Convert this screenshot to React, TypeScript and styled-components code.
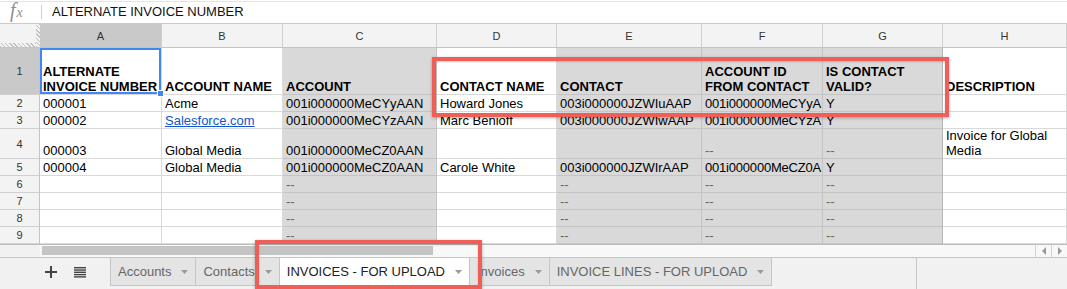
import styled, { createGlobalStyle } from 'styled-components'

const GlobalStyle = createGlobalStyle`
  html, body {
    margin: 0;
    padding: 0;
    background: #ffffff;
  }
  body {
    font-family: "Liberation Sans", Arial, sans-serif;
    color: #000;
  }
`

const COLUMNS = ['A', 'B', 'C', 'D', 'E', 'F', 'G', 'H']
const LOCKED = [false, false, true, false, true, true, true, false]

type CellValue = string | { link: string }

const HEADINGS = [
  'ALTERNATE INVOICE NUMBER',
  'ACCOUNT NAME',
  'ACCOUNT',
  'CONTACT NAME',
  'CONTACT',
  'ACCOUNT ID FROM CONTACT',
  'IS CONTACT VALID?',
  'DESCRIPTION',
]

const EMPTY_ROW: CellValue[] = ['', '', '--', '', '--', '--', '--', '']

// column F is narrower than its ids, the sheet shows them cut at the border
const ROWS: CellValue[][] = [
  ['000001', 'Acme', '001i000000MeCYyAAN', 'Howard Jones', '003i000000JZWIuAAP', '001i000000MeCYyA', 'Y', ''],
  ['000002', { link: 'Salesforce.com' }, '001i000000MeCYzAAN', 'Marc Benioff', '003i000000JZWIwAAP', '001i000000MeCYzA', 'Y', ''],
  ['000003', 'Global Media', '001i000000MeCZ0AAN', '', '', '--', '--', 'Invoice for Global Media'],
  ['000004', 'Global Media', '001i000000MeCZ0AAN', 'Carole White', '003i000000JZWIrAAP', '001i000000MeCZ0A', 'Y', ''],
  EMPTY_ROW,
  EMPTY_ROW,
  EMPTY_ROW,
  EMPTY_ROW,
]

const TABS = ['Accounts', 'Contacts', 'INVOICES - FOR UPLOAD', 'Invoices', 'INVOICE LINES - FOR UPLOAD']

const Page = styled.div`
  position: relative;
  width: 1067px;
  height: 289px;
  overflow: hidden;
  background: #fff;
`

const FormulaBar = styled.div`
  box-sizing: border-box;
  height: 24px;
  display: flex;
  align-items: center;
  background: linear-gradient(#fff 0 1px, #e4e4e4 1px 2px, #fff 2px);
  border-bottom: 1px solid #cacaca;
`

const FxIcon = styled.div`
  box-sizing: border-box;
  width: 41px;
  padding-left: 10px;
  color: #8e8e8e;
  font-family: "Liberation Serif", "Times New Roman", serif;
  font-style: italic;
  font-size: 20px;
  line-height: 20px;

  small {
    font-size: 14px;
    margin-left: 1px;
  }
`

const FormulaDivider = styled.div`
  width: 1px;
  height: 14px;
  background: #cfcfcf;
`

const FormulaText = styled.div`
  margin-left: 10px;
  font-size: 13px;
  color: #111;
`

const Grid = styled.div`
  display: grid;
  grid-template-columns: 40px 122px 121px 154px 120px 145px 121px 120px 124px;
  grid-template-rows: 24px 47px 17px 17px 30px 17px 17px 17px 17px 17px;
`

const Corner = styled.div`
  box-sizing: border-box;
  border-bottom: 1px solid #c4c4c4;
  background:
    repeating-linear-gradient(45deg, #c2c2c2 0 1px, #f1f1f1 1px 3px) right top / 4px 100% no-repeat,
    repeating-linear-gradient(45deg, #c2c2c2 0 1px, #f1f1f1 1px 3px) left bottom / 100% 4px no-repeat,
    #f3f3f3;
`

const ColumnHeader = styled.div<{ $active?: boolean }>`
  box-sizing: border-box;
  display: flex;
  align-items: center;
  justify-content: center;
  border-right: 1px solid #d0d0d0;
  border-bottom: 1px solid #c4c4c4;
  background: ${(p) => (p.$active ? '#c9c9c9' : '#f3f3f3')};
  font-size: 11px;
  color: #333;
`

const RowHeader = styled.div<{ $active?: boolean }>`
  box-sizing: border-box;
  display: flex;
  align-items: center;
  justify-content: center;
  border-right: 1px solid #c4c4c4;
  border-bottom: 1px solid #d0d0d0;
  background: ${(p) => (p.$active ? '#c9c9c9' : '#f3f3f3')};
  font-size: 11px;
  color: #333;
`

const Cell = styled.div<{ $locked?: boolean; $bold?: boolean; $wrap?: boolean; $selected?: boolean; $edge?: boolean; $tight?: boolean }>`
  box-sizing: border-box;
  position: relative;
  display: flex;
  align-items: flex-end;
  padding: 0 ${(p) => (p.$tight ? 0 : 2)}px 0 3px;
  border-right: 1px solid ${(p) => (p.$edge ? '#b4b4b4' : p.$locked ? '#c4c4c4' : '#d9d9d9')};
  border-bottom: 1px solid ${(p) => (p.$locked ? '#c4c4c4' : '#d9d9d9')};
  background: ${(p) => (p.$locked ? '#d9d9d9' : '#fff')};
  font-size: 13px;
  line-height: 15px;
  letter-spacing: ${(p) => (p.$tight ? '-0.2px' : 'normal')};
  font-weight: ${(p) => (p.$bold ? 700 : 400)};
  white-space: ${(p) => (p.$wrap ? 'normal' : 'nowrap')};
  overflow: ${(p) => (p.$selected ? 'visible' : 'hidden')};
  z-index: ${(p) => (p.$selected ? 2 : 'auto')};
  box-shadow: ${(p) => (p.$selected ? 'inset 0 0 0 2px #4285f4' : 'none')};

  &::after {
    content: '';
    display: ${(p) => (p.$selected ? 'block' : 'none')};
    position: absolute;
    right: -3px;
    bottom: -3px;
    width: 5px;
    height: 5px;
    background: #4285f4;
    border: 1px solid #fff;
  }
`

const CellLink = styled.span`
  color: #1155cc;
  text-decoration: underline;
`

const Dash = styled.span`
  color: #666;
`

const ScrollRow = styled.div`
  box-sizing: border-box;
  height: 13px;
  display: flex;
  border-top: 1px solid #bdbdbd;
  background: #f8f8f8;
`

const ScrollCorner = styled.div`
  width: 40px;
  background: #f1f1f1;
`

const ScrollTrack = styled.div`
  flex: 1;
  padding: 1px 0 0 2px;
`

const ScrollThumb = styled.div`
  width: 391px;
  height: 9px;
  background: #c4c4c4;
`

const ScrollArrow = styled.div<{ $dir: 'left' | 'right' }>`
  width: 15px;
  display: flex;
  align-items: center;
  justify-content: center;
  border-left: 1px solid #d2d2d2;

  &::before {
    content: '';
    width: 0;
    height: 0;
    border-top: 4px solid transparent;
    border-bottom: 4px solid transparent;
    ${(p) => (p.$dir === 'left' ? 'border-right: 4px solid #999;' : 'border-left: 4px solid #999;')}
  }
`

const TabBar = styled.div`
  box-sizing: border-box;
  height: 32px;
  display: grid;
  grid-template-columns: 916px 1fr;
  background: #f1f1f1;
  border-top: 1px solid #c6c6c6;
`

const TabStrip = styled.div`
  display: flex;
  align-items: flex-start;
`

const SheetControls = styled.div`
  box-sizing: border-box;
  width: 111px;
  height: 28px;
  display: flex;
  align-items: center;
  padding-left: 45px;
  gap: 17px;
`

const Tab = styled.div<{ $active?: boolean }>`
  box-sizing: border-box;
  height: 28px;
  margin-left: -1px;
  display: flex;
  align-items: center;
  gap: 10px;
  padding: 0 7px 0 7px;
  border: 1px solid #c6c6c6;
  border-top: none;
  background: ${(p) => (p.$active ? '#fff' : '#e4e4e4')};
  color: ${(p) => (p.$active ? '#222' : '#666')};
  font-size: 13px;
  white-space: nowrap;
`

const TabRest = styled.div`
  border-left: 1px solid #c6c6c6;
`

const Annotation = styled.div<{ $left: number; $top: number; $width: number; $height: number }>`
  position: absolute;
  box-sizing: border-box;
  left: ${(p) => p.$left}px;
  top: ${(p) => p.$top}px;
  width: ${(p) => p.$width}px;
  height: ${(p) => p.$height}px;
  border: 4px solid #ef5f55;
  box-shadow: 0 1px 3px rgba(0, 0, 0, 0.3), inset 0 1px 2px rgba(0, 0, 0, 0.2);
  pointer-events: none;
  z-index: 5;
`

const Caret = () => (
  <svg width="7" height="4" viewBox="0 0 7 4">
    <polygon points="0,0 7,0 3.5,4" fill="#9a9a9a" />
  </svg>
)

const PlusIcon = () => (
  <svg width="12" height="12" viewBox="0 0 12 12">
    <rect x="5" y="0" width="2" height="12" fill="#444" />
    <rect x="0" y="5" width="12" height="2" fill="#444" />
  </svg>
)

const ListIcon = () => (
  <svg width="12" height="11" viewBox="0 0 12 11">
    {[0, 2.3, 4.6, 6.9, 9.2].map((y) => (
      <rect key={y} x="0" y={y} width="12" height="1.4" fill="#444" />
    ))}
  </svg>
)

function renderValue(v: CellValue) {
  if (typeof v !== 'string') return <CellLink>{v.link}</CellLink>
  if (v === '--') return <Dash>--</Dash>
  return v
}

export default function App() {
  return (
    <>
      <GlobalStyle />
      <Page>
        <FormulaBar>
          <FxIcon>
            f<small>x</small>
          </FxIcon>
          <FormulaDivider />
          <FormulaText>ALTERNATE INVOICE NUMBER</FormulaText>
        </FormulaBar>

        <Grid>
          <Corner />
          {COLUMNS.map((c, i) => (
            <ColumnHeader key={c} $active={i === 0}>
              {c}
            </ColumnHeader>
          ))}

          <RowHeader $active>1</RowHeader>
          {HEADINGS.map((h, i) => (
            <Cell key={h} $locked={LOCKED[i]} $edge={i === 6} $bold $wrap $selected={i === 0}>
              {h}
            </Cell>
          ))}

          {ROWS.map((row, r) => [
            <RowHeader key={`h${r}`}>{r + 2}</RowHeader>,
            ...row.map((v, i) => (
              <Cell key={`${r}-${i}`} $locked={LOCKED[i]} $edge={i === 6} $wrap={i === 7} $tight={i === 5}>
                {renderValue(v)}
              </Cell>
            )),
          ])}
        </Grid>

        <ScrollRow>
          <ScrollCorner />
          <ScrollTrack>
            <ScrollThumb />
          </ScrollTrack>
          <ScrollArrow $dir="left" />
          <ScrollArrow $dir="right" />
        </ScrollRow>

        <TabBar>
          <TabStrip>
            <SheetControls>
              <PlusIcon />
              <ListIcon />
            </SheetControls>
            {TABS.map((t) => (
              <Tab key={t} $active={t === 'INVOICES - FOR UPLOAD'}>
                {t}
                <Caret />
              </Tab>
            ))}
          </TabStrip>
          <TabRest />
        </TabBar>

        <Annotation $left={432} $top={57} $width={517} $height={60} />
        <Annotation $left={255} $top={240} $width={227} $height={49} />
      </Page>
    </>
  )
}
